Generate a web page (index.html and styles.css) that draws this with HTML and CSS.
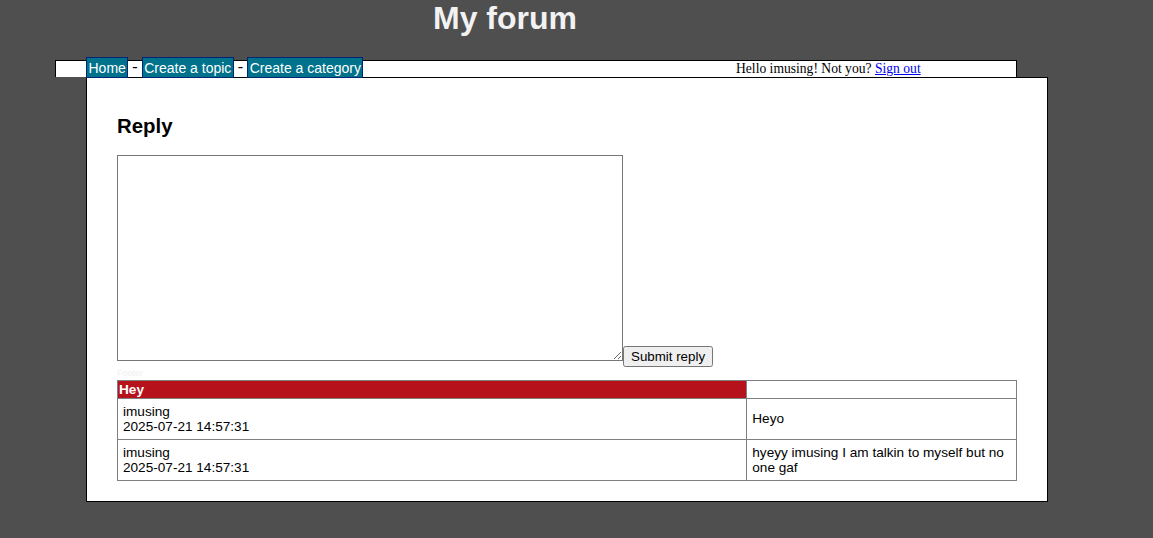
FILE: index.html
```html
<!DOCTYPE html>
<html>
<head>
<meta charset="utf-8">
<title>My forum</title>
<link rel="stylesheet" href="styles.css">
</head>
<body>
<header class="site-header">
  <h1 class="site-title">My forum</h1>
</header>
<div class="wrapper">
  <nav class="menu">
    <div class="userbar">Hello imusing! Not you? <a href="#">Sign out</a></div>
    <a class="item" href="#">Home</a> - <a class="item" href="#">Create a topic</a> - <a class="item" href="#">Create a category</a>
  </nav>
  <main class="content">
    <h2 class="reply-title">Reply</h2>
    <form class="reply-form">
      <textarea class="reply-text" name="reply-content"></textarea><input class="submit" type="submit" value="Submit reply">
    </form>
    <div class="footer">Footer</div>
    <table class="topic">
      <tr>
        <th class="topic-head">Hey</th>
        <th class="topic-head-empty"></th>
      </tr>
      <tr>
        <td class="post-meta">imusing<br>2025-07-21 14:57:31</td>
        <td class="post-body">Heyo</td>
      </tr>
      <tr>
        <td class="post-meta">imusing<br>2025-07-21 14:57:31</td>
        <td class="post-body">hyeyy imusing I am talkin to myself but no one gaf</td>
      </tr>
    </table>
  </main>
</div>
</body>
</html>
```

FILE: styles.css
```css
html, body {
  margin: 0;
  padding: 0;
}
body {
  background: #4f4f4f;
  font-family: "Liberation Serif", serif;
  font-size: 13.6px;
  min-height: 538px;
}
.site-header {
  height: 60px;
}
.site-title {
  margin: 0;
  padding-top: 2px;
  width: 1010px;
  text-align: center;
  font-family: "Liberation Sans", Arial, sans-serif;
  font-size: 32px;
  line-height: 32px;
  font-weight: bold;
  color: #f2f2f2;
}
.wrapper {
  margin-left: 55px;
  width: 962px;
}
.menu {
  width: 900px;
  height: 16px;
  padding: 0 30px;
  background: #fff;
  border: 1px solid #000;
  border-bottom: none;
  font-size: 16px;
  line-height: 12px;
  color: #000;
}
.item {
  font-family: "Liberation Sans", Arial, sans-serif;
  font-size: 14px;
  line-height: 12px;
  background: #00728b;
  border: 1px solid #032472;
  color: #fff;
  padding: 1.5px 1.5px;
  text-decoration: none;
}
.userbar {
  float: right;
  width: 250px;
  font-size: 13.6px;
  line-height: 16px;
}
.userbar a {
  color: #0000ee;
}
.content {
  display: block;
  width: 900px;
  margin-left: 31px;
  padding: 20px 30px;
  background: #fff;
  border: 1px solid #000;
  font-family: "Liberation Sans", Arial, sans-serif;
  font-size: 13.6px;
}
.reply-title {
  font-size: 20.4px;
  margin: 16.9px 0;
}
.reply-form {
  margin: 0;
}
.reply-text {
  box-sizing: border-box;
  width: 506px;
  height: 206px;
  margin: 0;
  border: 1px solid #767676;
  vertical-align: baseline;
}
.submit {
  font-family: "Liberation Sans", Arial, sans-serif;
  font-size: 13.33px;
  margin: 0;
}
.footer {
  font-size: 9px;
  line-height: 13px;
  color: #efefef;
}
.topic {
  width: 100%;
  border-collapse: collapse;
  border: 1px solid #808080;
}
.topic th, .topic td {
  border: 1px solid #808080;
  text-align: left;
}
.topic-head {
  width: 70%;
  background: #b5121b;
  color: #fff;
  padding: 1px;
  font-weight: bold;
}
.topic-head-empty {
  padding: 1px;
}
.post-meta, .post-body {
  padding: 5px;
  vertical-align: middle;
}
```
